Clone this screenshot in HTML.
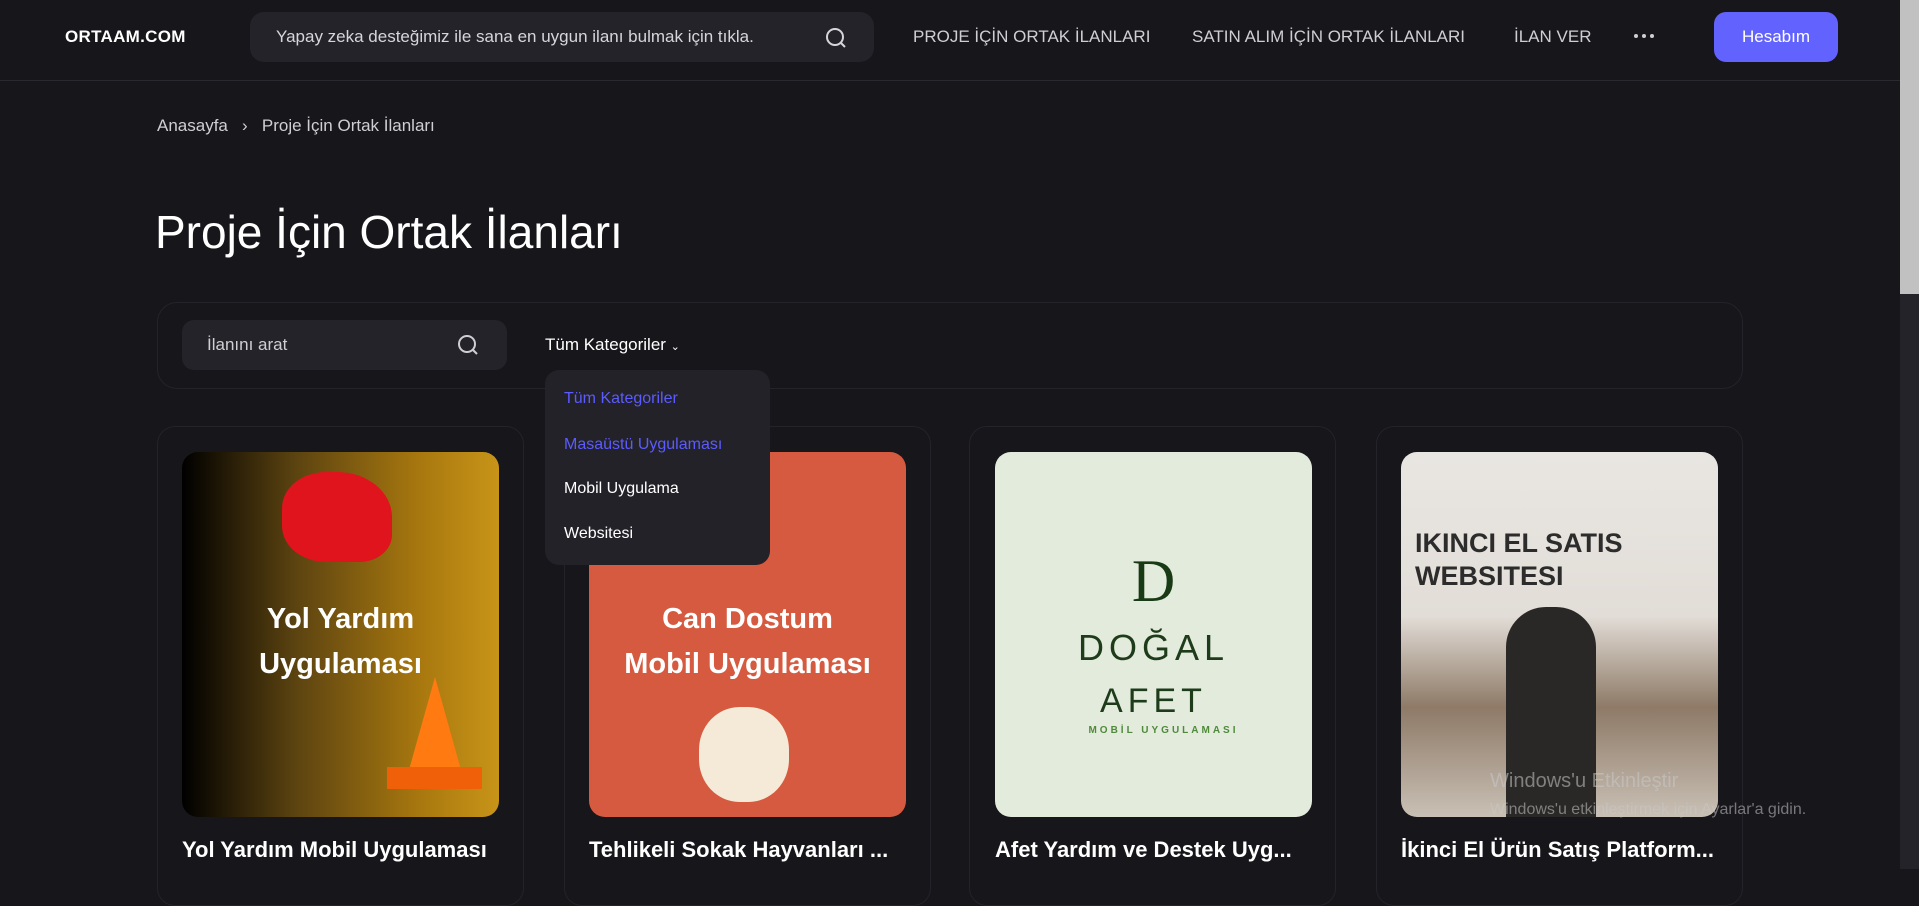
<!DOCTYPE html>
<html><head><meta charset="utf-8"><style>
*{box-sizing:border-box;margin:0;padding:0}
body{width:1919px;height:869px;overflow:hidden;background:#17161b;font-family:"Liberation Sans",sans-serif;color:#fff;position:relative}
.abs{position:absolute}
.hdr{left:0;top:0;width:1900px;height:81px;border-bottom:1px solid #2a2930}
.logo{left:65px;top:27px;font-size:17px;font-weight:bold;letter-spacing:0.3px}
.srch{left:250px;top:12px;width:624px;height:50px;background:#242329;border-radius:14px;color:#d6d6da;font-size:17px;line-height:50px;padding-left:26px}
.nav{top:27px;font-size:17px;color:#cfcfd3}
.btn{left:1714px;top:12px;width:124px;height:50px;background:#6262ff;border-radius:12px;text-align:center;line-height:50px;font-size:17px}
.sb{left:1900px;top:0;width:19px;height:869px;background:#242329}
.thumb{left:1900px;top:0;width:19px;height:294px;background:#c1c1c1}
.card{width:367px;height:480px;top:426px;border:1px solid #24232a;border-radius:18px}
.img{width:317px;height:365px;top:452px;border-radius:16px;overflow:hidden}
.ct{top:837px;font-size:22px;font-weight:600;white-space:nowrap}
.dd{left:545px;top:370px;width:225px;height:195px;background:#232228;border-radius:14px;font-size:16px}
.dd div{position:absolute;left:19px}
</style></head><body>
<div class="abs hdr"></div>
<div class="abs logo">ORTAAM.COM</div>
<div class="abs srch">Yapay zeka desteğimiz ile sana en uygun ilanı bulmak için tıkla.
<svg class="abs" style="left:574px;top:14px" width="24" height="24" viewBox="0 0 24 24" fill="none" stroke="#d6d6da" stroke-width="2"><circle cx="11" cy="11" r="8"/><path d="M17 17l4 4"/></svg></div>
<div class="abs nav" style="left:913px">PROJE İÇİN ORTAK İLANLARI</div>
<div class="abs nav" style="left:1192px">SATIN ALIM İÇİN ORTAK İLANLARI</div>
<div class="abs nav" style="left:1514px">İLAN VER</div>
<svg class="abs" style="left:1633px;top:33px" width="22" height="6" viewBox="0 0 22 6" fill="#cfcfd3"><circle cx="3" cy="3" r="2"/><circle cx="11" cy="3" r="2"/><circle cx="19" cy="3" r="2"/></svg>
<div class="abs btn">Hesabım</div>
<div class="abs sb"></div><div class="abs thumb"></div>

<div class="abs" style="left:157px;top:116px;font-size:17px;color:#cfcfd3">Anasayfa &nbsp;&nbsp;›&nbsp;&nbsp; Proje İçin Ortak İlanları</div>
<div class="abs" style="left:155px;top:205px;font-size:46px">Proje İçin Ortak İlanları</div>

<div class="abs" style="left:157px;top:302px;width:1586px;height:87px;border:1px solid #24232a;border-radius:20px"></div>
<div class="abs" style="left:182px;top:320px;width:325px;height:50px;background:#242329;border-radius:12px;font-size:17px;color:#cfcfd3;line-height:50px;padding-left:25px">İlanını arat
<svg class="abs" style="left:274px;top:13px" width="24" height="24" viewBox="0 0 24 24" fill="none" stroke="#cfcfd3" stroke-width="2"><circle cx="11" cy="11" r="8"/><path d="M17 17l4 4"/></svg></div>
<div class="abs" style="left:545px;top:335px;font-size:17px">Tüm Kategoriler <span style="font-size:11px">⌄</span></div>

<div class="abs card" style="left:157px"></div>
<div class="abs card" style="left:564px"></div>
<div class="abs card" style="left:969px"></div>
<div class="abs card" style="left:1376px"></div>

<div class="abs img" style="left:182px;background:linear-gradient(90deg,#000 0%,#5a4210 35%,#a8780f 75%,#c89418 100%)">
<div class="abs" style="left:100px;top:20px;width:110px;height:90px;background:#e0141c;border-radius:40% 50% 30% 40%"></div>
<div class="abs" style="left:0;top:145px;width:317px;text-align:center;font-size:29px;font-weight:bold;line-height:45px">Yol Yardım<br>Uygulaması</div>
<div class="abs" style="left:225px;top:225px;width:0;height:0;border-left:28px solid transparent;border-right:28px solid transparent;border-bottom:100px solid #ff7a10"></div>
<div class="abs" style="left:205px;top:315px;width:95px;height:22px;background:#f06008"></div>
</div>
<div class="abs img" style="left:589px;background:#d65a3f">
<div class="abs" style="left:0;top:145px;width:317px;text-align:center;font-size:29px;font-weight:bold;line-height:45px">Can Dostum<br>Mobil Uygulaması</div>
<div class="abs" style="left:110px;top:255px;width:90px;height:95px;background:#f4ead7;border-radius:45%"></div>
</div>
<div class="abs img" style="left:995px;background:#e3ebdd;color:#1e3b1a;text-align:center">
<div class="abs" style="left:0;top:95px;width:317px;font-family:'Liberation Serif',serif;font-size:60px;color:#183a14">D</div>
<div class="abs" style="left:0;top:175px;width:317px;font-size:36px;letter-spacing:5px">DOĞAL</div>
<div class="abs" style="left:0;top:230px;width:317px;font-size:34px;letter-spacing:5px">AFET</div>
<div class="abs" style="left:10px;top:273px;width:317px;font-size:10px;letter-spacing:3px;color:#4f8a3a;font-weight:bold">MOBİL UYGULAMASI</div>
</div>
<div class="abs img" style="left:1401px;background:linear-gradient(180deg,#e9e6e2 0%,#e2ddd7 45%,#8e7a67 70%,#c9c0b5 100%)">
<div class="abs" style="left:14px;top:75px;font-size:27px;font-weight:bold;color:#2c2c2c;line-height:33px">IKINCI EL SATIS<br>WEBSITESI</div>
<div class="abs" style="left:105px;top:155px;width:90px;height:215px;background:#2a2826;border-radius:40px 40px 0 0"></div>
</div>

<div class="abs ct" style="left:182px">Yol Yardım Mobil Uygulaması</div>
<div class="abs ct" style="left:589px">Tehlikeli Sokak Hayvanları ...</div>
<div class="abs ct" style="left:995px">Afet Yardım ve Destek Uyg...</div>
<div class="abs ct" style="left:1401px">İkinci El Ürün Satış Platform...</div>

<div class="abs" style="left:1490px;top:770px;font-size:20px;color:rgba(200,200,200,.55)">Windows'u Etkinleştir</div>
<div class="abs" style="left:1490px;top:801px;font-size:16px;color:rgba(200,200,200,.55)">Windows'u etkinleştirmek için Ayarlar'a gidin.</div>

<div class="abs dd">
<div style="top:20px;color:#5b5bff">Tüm Kategoriler</div>
<div style="top:66px;color:#5b5bff">Masaüstü Uygulaması</div>
<div style="top:110px">Mobil Uygulama</div>
<div style="top:155px">Websitesi</div>
</div>
</body></html>
